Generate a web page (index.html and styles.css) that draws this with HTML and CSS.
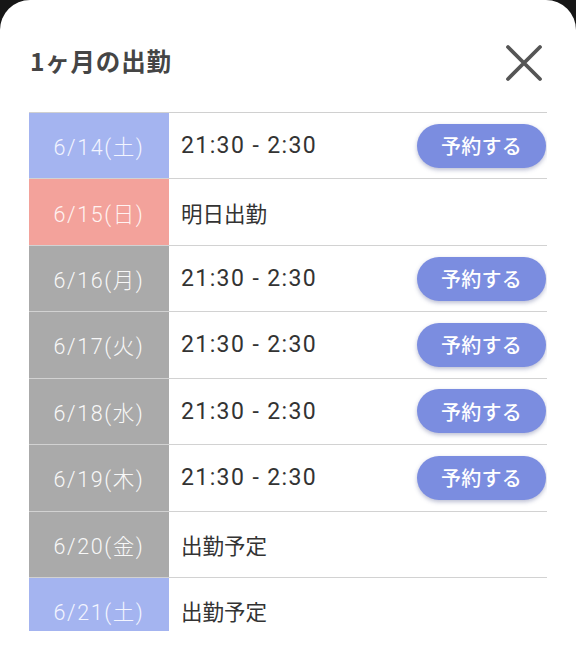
FILE: index.html
```html
<!DOCTYPE html>
<html lang="ja">
<head>
<meta charset="utf-8">
<link rel="stylesheet" href="styles.css">
</head>
<body>
<div class="sheet">
  <div class="header">
    <h1 class="title">1ヶ月の出勤</h1>
    <button class="close" aria-label="閉じる">
      <svg width="40" height="40" viewBox="0 0 40 40"><path d="M4 4 L36 36 M36 4 L4 36" stroke="#555" stroke-width="3.8" stroke-linecap="round" fill="none"/></svg>
    </button>
  </div>
  <div class="list">
    <div class="row"><div class="date sat">6/14(土)</div><div class="info"><span class="time">21:30 - 2:30</span><button class="reserve">予約する</button></div></div>
    <div class="row"><div class="date sun">6/15(日)</div><div class="info"><span class="note">明日出勤</span></div></div>
    <div class="row"><div class="date">6/16(月)</div><div class="info"><span class="time">21:30 - 2:30</span><button class="reserve">予約する</button></div></div>
    <div class="row"><div class="date">6/17(火)</div><div class="info"><span class="time">21:30 - 2:30</span><button class="reserve">予約する</button></div></div>
    <div class="row"><div class="date">6/18(水)</div><div class="info"><span class="time">21:30 - 2:30</span><button class="reserve">予約する</button></div></div>
    <div class="row"><div class="date">6/19(木)</div><div class="info"><span class="time">21:30 - 2:30</span><button class="reserve">予約する</button></div></div>
    <div class="row"><div class="date">6/20(金)</div><div class="info"><span class="note">出勤予定</span></div></div>
    <div class="row"><div class="date sat">6/21(土)</div><div class="info"><span class="note">出勤予定</span></div></div>
  </div>
</div>
</body>
</html>
```
FILE: styles.css
```css
html, body {
  margin: 0;
  padding: 0;
  background: #161616;
}
body {
  width: 576px;
  height: 670px;
  overflow: hidden;
  font-family: Roboto, "Noto Sans CJK JP", sans-serif;
}
.sheet {
  background: #fff;
  height: 670px;
  border-radius: 30px 30px 0 0;
  padding: 0 29px;
  box-sizing: border-box;
}
.header {
  height: 112px;
  display: flex;
  align-items: flex-start;
  justify-content: space-between;
}
.title {
  margin: 44px 0 0 1px;
  font-family: "Noto Sans CJK JP", sans-serif;
  font-size: 24.5px;
  line-height: 34px;
  font-weight: 700;
  color: #454545;
  letter-spacing: 0.8px;
}
.close {
  margin: 43px 3px 0 0;
  padding: 0;
  border: 0;
  background: none;
  width: 40px;
  height: 40px;
}
.close svg { display: block; }
.list {
  height: 518px;
  overflow: hidden;
  border-top: 1px solid #d0d0d0;
}
.row {
  display: flex;
  height: 65.43px;
  border-bottom: 1px solid #d2d2d2;
}
.date {
  width: 140px;
  flex: none;
  background: #aaaaaa;
  color: #f8f8f8;
  font-size: 21.5px;
  font-weight: 300;
  letter-spacing: 1.6px;
  display: flex;
  align-items: center;
  justify-content: center;
}
.date.sat { background: #a4b4f0; color: #f3f5ff; }
.date.sun { background: #f3a29b; color: #fff2f1; }
.info {
  flex: 1;
  display: flex;
  align-items: center;
  justify-content: space-between;
  padding-left: 12px;
  color: #333;
}
.time {
  font-size: 23px;
  letter-spacing: 1.4px;
}
.note {
  font-family: "Noto Sans CJK JP", sans-serif;
  font-size: 21.5px;
}
.reserve {
  width: 129px;
  height: 44px;
  margin-right: 1px;
  border: 0;
  border-radius: 22px;
  background: #7b8de0;
  color: #fff;
  font-family: "Noto Sans CJK JP", sans-serif;
  font-size: 20px;
  font-weight: 500;
  letter-spacing: 0.3px;
  box-shadow: 0 2px 4px rgba(60, 70, 130, 0.35);
  padding: 0;
}
```
